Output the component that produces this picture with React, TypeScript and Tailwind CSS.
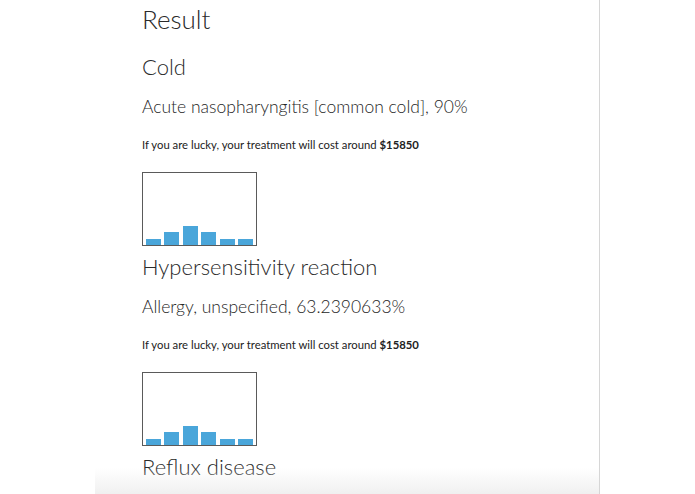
import React from 'react';

type Diagnosis = {
  name: string;
  detail?: string;
  cost?: number;
  bars?: number[];
};

const results: Diagnosis[] = [
  {
    name: 'Cold',
    detail: 'Acute nasopharyngitis [common cold], 90%',
    cost: 15850,
    bars: [6, 13, 19, 13, 6, 6],
  },
  {
    name: 'Hypersensitivity reaction',
    detail: 'Allergy, unspecified, 63.2390633%',
    cost: 15850,
    bars: [6, 13, 19, 13, 6, 6],
  },
  // only the heading of the third result is above the fold
  { name: 'Reflux disease' },
];

function CostChart({ bars }: { bars: number[] }) {
  return (
    <div className="mt-[19px] flex h-[74px] w-[115px] items-end justify-between border border-[#5a5a5a] px-[3px]">
      {bars.map((h, i) => (
        <div key={i} className="w-[15px] bg-[#4aa6da]" style={{ height: h }} />
      ))}
    </div>
  );
}

function ResultItem({ item, first }: { item: Diagnosis; first: boolean }) {
  return (
    <section className={`flex flex-col ${first ? 'mt-[18px]' : 'mt-[7px]'}`}>
      <h2 className="text-[22px] leading-[28px] font-light text-[#2a2a2a]">{item.name}</h2>
      {item.detail && (
        <h3 className="mt-[15px] text-[17.5px] leading-[22px] font-light text-[#262626]">{item.detail}</h3>
      )}
      {item.cost && (
        <p className="mt-[19px] text-[11.3px] leading-[16px] text-[#222]">
          If you are lucky, your treatment will cost around <strong className="font-bold">${item.cost}</strong>
        </p>
      )}
      {item.bars && <CostChart bars={item.bars} />}
    </section>
  );
}

export default function App() {
  return (
    <div className="h-screen overflow-hidden bg-white font-['Lato','Open_Sans',sans-serif]">
      <div className="relative ml-[95px] flex h-full w-[505px] flex-col overflow-hidden border-r border-[#d6d6d6] pl-[47px]">
        <h1 className="mt-[3px] text-[26px] leading-[32px] font-light text-[#2a2a2a]">Result</h1>
        {results.map((r, i) => (
          <ResultItem key={r.name} item={r} first={i === 0} />
        ))}
        <div className="pointer-events-none absolute inset-x-0 bottom-0 h-[26px] bg-gradient-to-b from-white/0 to-[#f0f0f0]" />
      </div>
    </div>
  );
}
